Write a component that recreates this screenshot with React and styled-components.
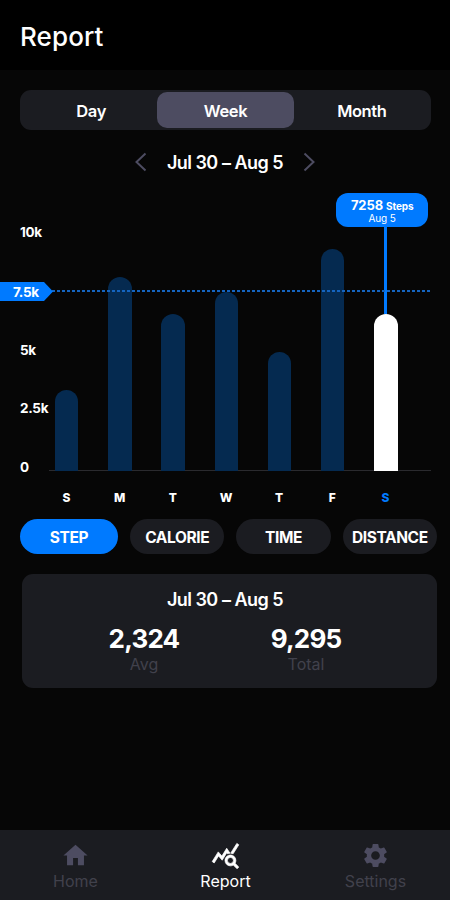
import React from "react";
import styled, { createGlobalStyle } from "styled-components";
import { MdHome, MdQueryStats, MdSettings } from "react-icons/md";

const ranges = ["Day", "Week", "Month"];
const metrics = ["STEP", "CALORIE", "TIME", "DISTANCE"];
const ticks = ["10k", "7.5k", "5k", "2.5k", "0"];

const days = [
  { id: "sun", label: "S", height: 80 },
  { id: "mon", label: "M", height: 193 },
  { id: "tue", label: "T", height: 156 },
  { id: "wed", label: "W", height: 178 },
  { id: "thu", label: "T", height: 118 },
  { id: "fri", label: "F", height: 221 },
  { id: "sat", label: "S", height: 156, active: true },
];

const tabs = [
  { label: "Home", Icon: MdHome },
  { label: "Report", Icon: MdQueryStats, active: true },
  { label: "Settings", Icon: MdSettings },
];

const Chevron = ({ flip }) => (
  <ChevronIcon viewBox="0 0 12 20" $flip={flip}>
    <path d="M10.5 1.5 L1.5 10 L10.5 18.5" />
  </ChevronIcon>
);

const Chart = () => (
  <ChartWrapper>
    <YAxis>
      {ticks.map((tick) => (
        <Tick key={tick}>{tick === "7.5k" ? "" : tick}</Tick>
      ))}
    </YAxis>
    <Plot>
      <Bars>
        {days.map(({ id, height, active }) => (
          <BarSlot key={id}>
            <Bar $height={height} $active={active}>
              {active && (
                <>
                  <Stem />
                  <Tooltip>
                    <TooltipValue>
                      7258 <small>Steps</small>
                    </TooltipValue>
                    <TooltipDate>Aug 5</TooltipDate>
                  </Tooltip>
                </>
              )}
            </Bar>
          </BarSlot>
        ))}
      </Bars>
      <DayLabels>
        {days.map(({ id, label, active }) => (
          <DayLabel key={id} $active={active}>
            {label}
          </DayLabel>
        ))}
      </DayLabels>
    </Plot>
    <GoalLine>
      <line x1="52" y1="1" x2="431" y2="1" />
    </GoalLine>
    <GoalTag>7.5k</GoalTag>
  </ChartWrapper>
);

const App = () => {
  return (
    <Screen>
      <GlobalStyle />
      <Header>
        <Title>Report</Title>
      </Header>
      <Content>
        <Segmented>
          {ranges.map((range) => (
            <Segment key={range} $active={range === "Week"}>
              {range}
            </Segment>
          ))}
        </Segmented>
        <DateRow>
          <Chevron />
          <DateRange>Jul 30 – Aug 5</DateRange>
          <Chevron flip />
        </DateRow>
        <Chart />
        <Pills>
          {metrics.map((metric) => (
            <Pill key={metric} $active={metric === "STEP"}>
              {metric}
            </Pill>
          ))}
        </Pills>
        <Summary>
          <DateRange>Jul 30 – Aug 5</DateRange>
          <Stats>
            <Stat>
              <StatValue>2,324</StatValue>
              <StatLabel>Avg</StatLabel>
            </Stat>
            <Stat>
              <StatValue>9,295</StatValue>
              <StatLabel>Total</StatLabel>
            </Stat>
          </Stats>
        </Summary>
      </Content>
      <TabBar>
        {tabs.map(({ label, Icon, active }) => (
          <Tab key={label} $active={active}>
            <Icon size={29} />
            <TabLabel $active={active}>{label}</TabLabel>
          </Tab>
        ))}
      </TabBar>
    </Screen>
  );
};

export default App;

const GlobalStyle = createGlobalStyle`
  * {
    box-sizing: border-box;
  }

  body {
    margin: 0;
    background-color: #060606;
    font-family: Inter, "Liberation Sans", sans-serif;
    color: #fff;
  }

  button {
    border: none;
    padding: 0;
    font-family: inherit;
    color: inherit;
  }
`;

const Screen = styled.div`
  display: flex;
  flex-direction: column;
  width: 450px;
  height: 900px;
  overflow: hidden;
  background-color: #060606;
`;

const Header = styled.header`
  display: flex;
  align-items: center;
  height: 70px;
  padding: 3px 20px 0;
  background-color: #000;
`;

const Title = styled.h1`
  margin: 0;
  font-size: 26px;
  font-weight: 500;
  letter-spacing: 0.1px;
`;

const Content = styled.main`
  flex: 1;
  padding-top: 20px;
`;

const Segmented = styled.div`
  display: flex;
  width: 411px;
  height: 40px;
  margin-left: 20px;
  padding: 2px 1px;
  border-radius: 11px;
  background-color: #1b1c21;
`;

const Segment = styled.button`
  flex: 1;
  padding-top: 1px;
  border-radius: 10px;
  background-color: ${({ $active }) => ($active ? "#4d4c61" : "transparent")};
  font-size: 16.5px;
  font-weight: 600;
  letter-spacing: -0.4px;

  &:first-child {
    text-indent: 4px;
  }
`;

const DateRow = styled.div`
  display: flex;
  justify-content: center;
  align-items: center;
  gap: 20px;
  height: 63px;
  padding-top: 1px;
`;

const ChevronIcon = styled.svg`
  width: 12px;
  height: 20px;
  fill: none;
  stroke: #4d4c61;
  stroke-width: 2;
  transform: ${({ $flip }) => ($flip ? "scaleX(-1)" : "none")};
`;

const DateRange = styled.div`
  padding-top: 1px;
  font-size: 18px;
  font-weight: 600;
  letter-spacing: -0.6px;
  word-spacing: 0.3px;
  white-space: nowrap;
`;

const ChartWrapper = styled.section`
  position: relative;
  display: flex;
  height: 314px;
`;

const YAxis = styled.div`
  display: flex;
  flex-direction: column;
  justify-content: space-between;
  width: 40px;
  height: 251px;
  margin-top: 31px;
  padding-left: 20px;
`;

const Tick = styled.span`
  height: 16px;
  font-size: 13.5px;
  font-weight: 700;
  line-height: 16px;
  letter-spacing: -0.3px;
  white-space: nowrap;
`;

const Plot = styled.div`
  width: 391px;
`;

const Bars = styled.div`
  display: flex;
  align-items: flex-end;
  height: 278px;
  padding-right: 18.5px;
  background: linear-gradient(#2a2a2e, #2a2a2e) 9px 100% / 382px 1px no-repeat;
`;

const BarSlot = styled.div`
  display: flex;
  flex: 1;
  justify-content: center;
`;

const Bar = styled.div`
  position: relative;
  width: 23.5px;
  height: ${({ $height }) => $height + 1}px;
  border-radius: 12px 12px 0 0;
  background-color: ${({ $active }) => ($active ? "#fff" : "#052a50")};
`;

const Stem = styled.div`
  position: absolute;
  bottom: 100%;
  left: 10px;
  width: 3px;
  height: 88px;
  background-color: #007aff;
`;

const Tooltip = styled.div`
  position: absolute;
  bottom: calc(100% + 87px);
  left: -38px;
  display: flex;
  flex-direction: column;
  align-items: center;
  width: 92px;
  height: 34px;
  padding-top: 5px;
  border-radius: 12px;
  background-color: #007aff;
`;

const TooltipValue = styled.div`
  font-size: 13px;
  font-weight: 700;
  line-height: 14px;
  letter-spacing: -0.1px;
  white-space: nowrap;

  small {
    font-size: 10px;
    font-weight: 700;
  }
`;

const TooltipDate = styled.div`
  font-size: 10px;
  line-height: 10px;
  letter-spacing: -0.1px;
`;

const DayLabels = styled.div`
  display: flex;
  padding: 18px 19px 0 0;
`;

const DayLabel = styled.span`
  flex: 1;
  font-size: 12px;
  font-weight: 800;
  line-height: 17px;
  text-align: center;
  color: ${({ $active }) => ($active ? "#007aff" : "#fff")};
`;

const GoalLine = styled.svg`
  position: absolute;
  top: 97px;
  left: 0;
  width: 450px;
  height: 2px;
  stroke: #1464c0;
  stroke-width: 2;
  stroke-dasharray: 3 2;
`;

const GoalTag = styled.div`
  position: absolute;
  top: 89px;
  left: 0;
  width: 53px;
  height: 19px;
  padding-left: 13px;
  background-color: #007aff;
  clip-path: polygon(0 0, 44px 0, 100% 50%, 44px 100%, 0 100%);
  font-size: 13.5px;
  font-weight: 700;
  line-height: 20px;
  letter-spacing: -0.3px;
`;

const Pills = styled.div`
  display: flex;
  gap: 12px;
  margin: 12px 13px 0 20px;
`;

const Pill = styled.button`
  flex: ${({ $active }) => ($active ? "0 0 98px" : "1")};
  height: 35px;
  padding-top: 1px;
  border-radius: 18px;
  background-color: ${({ $active }) => ($active ? "#007aff" : "#1b1c21")};
  font-size: 15.5px;
  font-weight: 700;
  letter-spacing: -0.4px;
`;

const Summary = styled.section`
  display: flex;
  flex-direction: column;
  align-items: center;
  width: 415px;
  height: 114px;
  margin: 20px 0 0 22px;
  padding: 14px 9px 0 0;
  border-radius: 11px;
  background-color: #1b1c21;
`;

const Stats = styled.div`
  display: flex;
  margin-top: 13px;
`;

const Stat = styled.div`
  width: 162px;
  text-align: center;
`;

const StatValue = styled.div`
  font-size: 26px;
  font-weight: 700;
  line-height: 32px;
  letter-spacing: -0.8px;
`;

const StatLabel = styled.div`
  font-size: 16px;
  line-height: 19px;
  color: #41414c;
`;

const TabBar = styled.nav`
  display: flex;
  height: 70px;
  background-color: #1b1c21;
`;

const Tab = styled.div`
  display: flex;
  flex: 1;
  flex-direction: column;
  align-items: center;
  padding: 11px 0 0 1px;
  color: ${({ $active }) => ($active ? "#fff" : "#4d4c61")};

  svg {
    stroke-width: ${({ $active }) => ($active ? 0.6 : 0)};
  }

  svg [fill="none"] {
    stroke: none;
  }
`;

const TabLabel = styled.span`
  padding-top: 1px;
  font-size: 16px;
  line-height: 20px;
  color: ${({ $active }) => ($active ? "#fff" : "#41414c")};
`;
